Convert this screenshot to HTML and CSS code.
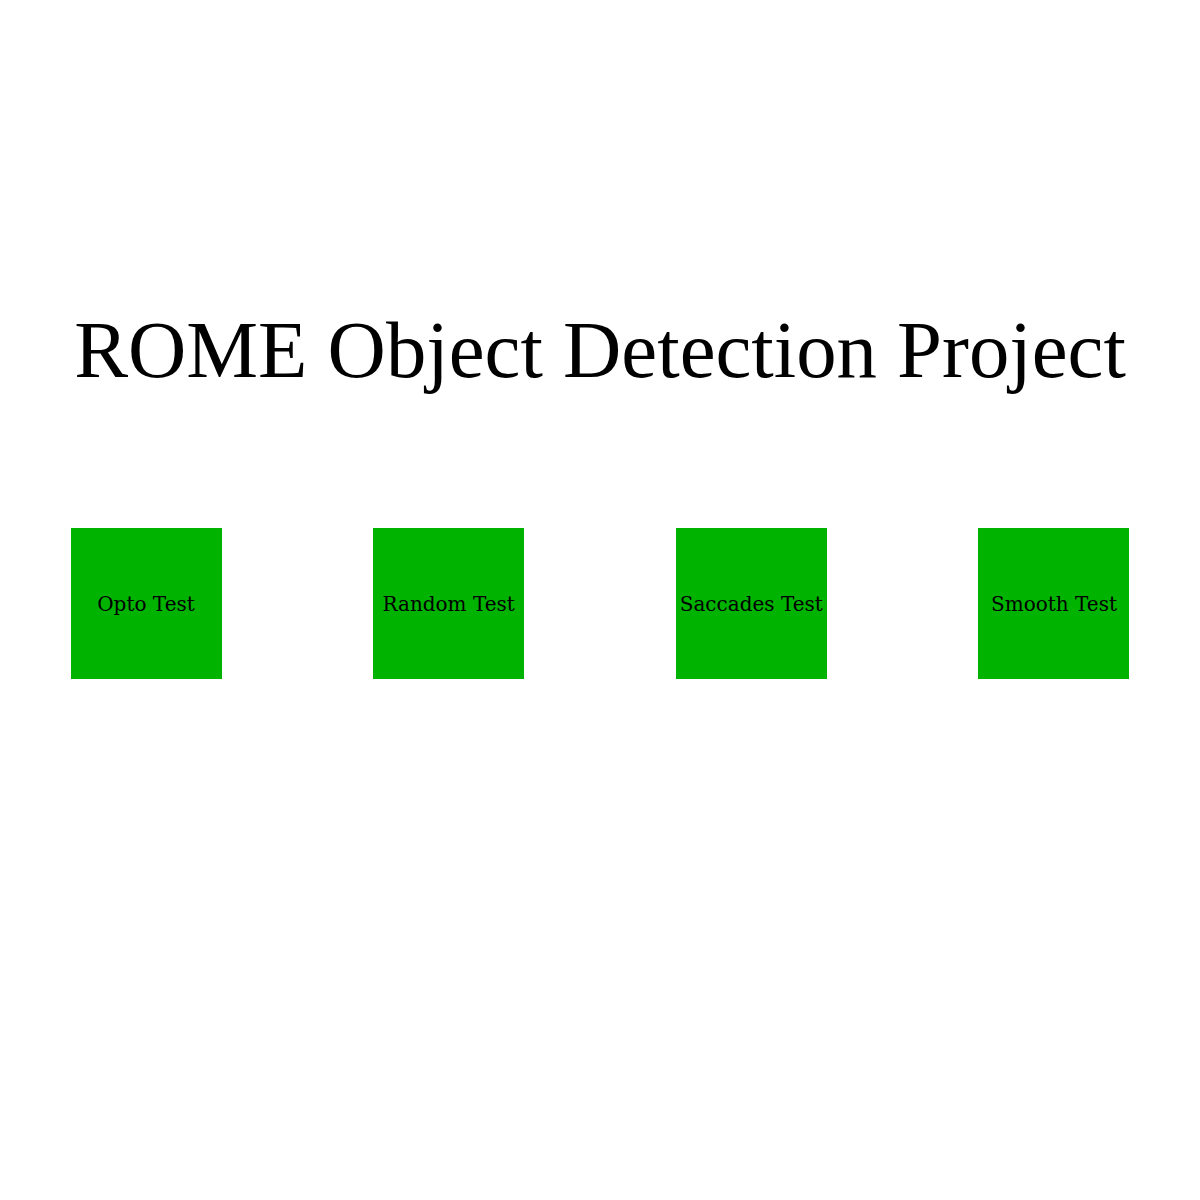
FILE: index.html
```html
<!DOCTYPE html>
<html>
<head>
<meta charset="utf-8">
<link rel="stylesheet" href="styles.css">
</head>
<body>
<div class="page">
  <h1 class="title">ROME Object Detection Project</h1>
  <div class="tests">
    <div class="test">Opto Test</div>
    <div class="test">Random Test</div>
    <div class="test">Saccades Test</div>
    <div class="test">Smooth Test</div>
  </div>
</div>
</body>
</html>
```
FILE: styles.css
```css
html, body {
  margin: 0;
  padding: 0;
  background: #ffffff;
}
.page {
  padding-top: 304px;
}
.title {
  margin: 0;
  font-family: "Liberation Serif", "Times New Roman", serif;
  font-weight: normal;
  font-size: 80.75px;
  text-align: center;
  color: #000;
}
.tests {
  display: flex;
  justify-content: space-between;
  padding: 0 70.5px;
  margin-top: 132px;
}
.test {
  width: 151px;
  height: 151px;
  background: #00b300;
  display: flex;
  align-items: center;
  justify-content: center;
  font-family: "DejaVu Serif", serif;
  font-size: 20px;
  color: #000;
  white-space: nowrap;
}
```
